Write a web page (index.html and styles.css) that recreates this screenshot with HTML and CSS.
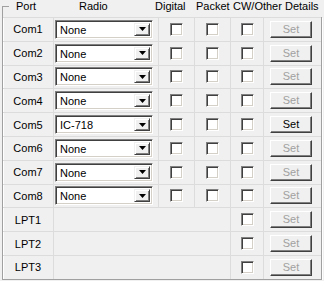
FILE: index.html
```html
<!DOCTYPE html>
<html>
<head>
    <title>Ports</title>
    <link rel="stylesheet" href="styles.css">
</head>
<body>
    <div class="head">
        <span class="corner"></span>
        <span class="h-port">Port</span>
        <span class="h-radio">Radio</span>
        <span class="h-digital">Digital</span>
        <span class="h-packet">Packet</span>
        <span class="h-cw">CW/Other Details</span>
    </div>

    <div class="grid">
        <div class="row">
            <div class="cell port">Com1</div>
            <div class="cell radio"><div class="combo"><span class="val">None</span><span class="drop"><svg width="7" height="4"><path d="M0 0h7L3.5 4z"/></svg></span></div></div>
            <div class="cell"><span class="chk"></span></div>
            <div class="cell"><span class="chk"></span></div>
            <div class="cell"><span class="chk"></span></div>
            <div class="cell set"><button class="btn" disabled>Set</button></div>
        </div>
        <div class="row">
            <div class="cell port">Com2</div>
            <div class="cell radio"><div class="combo"><span class="val">None</span><span class="drop"><svg width="7" height="4"><path d="M0 0h7L3.5 4z"/></svg></span></div></div>
            <div class="cell"><span class="chk"></span></div>
            <div class="cell"><span class="chk"></span></div>
            <div class="cell"><span class="chk"></span></div>
            <div class="cell set"><button class="btn" disabled>Set</button></div>
        </div>
        <div class="row">
            <div class="cell port">Com3</div>
            <div class="cell radio"><div class="combo"><span class="val">None</span><span class="drop"><svg width="7" height="4"><path d="M0 0h7L3.5 4z"/></svg></span></div></div>
            <div class="cell"><span class="chk"></span></div>
            <div class="cell"><span class="chk"></span></div>
            <div class="cell"><span class="chk"></span></div>
            <div class="cell set"><button class="btn" disabled>Set</button></div>
        </div>
        <div class="row">
            <div class="cell port">Com4</div>
            <div class="cell radio"><div class="combo"><span class="val">None</span><span class="drop"><svg width="7" height="4"><path d="M0 0h7L3.5 4z"/></svg></span></div></div>
            <div class="cell"><span class="chk"></span></div>
            <div class="cell"><span class="chk"></span></div>
            <div class="cell"><span class="chk"></span></div>
            <div class="cell set"><button class="btn" disabled>Set</button></div>
        </div>
        <div class="row">
            <div class="cell port">Com5</div>
            <div class="cell radio"><div class="combo"><span class="val">IC-718</span><span class="drop"><svg width="7" height="4"><path d="M0 0h7L3.5 4z"/></svg></span></div></div>
            <div class="cell"><span class="chk"></span></div>
            <div class="cell"><span class="chk"></span></div>
            <div class="cell"><span class="chk"></span></div>
            <div class="cell set"><button class="btn">Set</button></div>
        </div>
        <div class="row">
            <div class="cell port">Com6</div>
            <div class="cell radio"><div class="combo"><span class="val">None</span><span class="drop"><svg width="7" height="4"><path d="M0 0h7L3.5 4z"/></svg></span></div></div>
            <div class="cell"><span class="chk"></span></div>
            <div class="cell"><span class="chk"></span></div>
            <div class="cell"><span class="chk"></span></div>
            <div class="cell set"><button class="btn" disabled>Set</button></div>
        </div>
        <div class="row">
            <div class="cell port">Com7</div>
            <div class="cell radio"><div class="combo"><span class="val">None</span><span class="drop"><svg width="7" height="4"><path d="M0 0h7L3.5 4z"/></svg></span></div></div>
            <div class="cell"><span class="chk"></span></div>
            <div class="cell"><span class="chk"></span></div>
            <div class="cell"><span class="chk"></span></div>
            <div class="cell set"><button class="btn" disabled>Set</button></div>
        </div>
        <div class="row">
            <div class="cell port">Com8</div>
            <div class="cell radio"><div class="combo"><span class="val">None</span><span class="drop"><svg width="7" height="4"><path d="M0 0h7L3.5 4z"/></svg></span></div></div>
            <div class="cell"><span class="chk"></span></div>
            <div class="cell"><span class="chk"></span></div>
            <div class="cell"><span class="chk"></span></div>
            <div class="cell set"><button class="btn" disabled>Set</button></div>
        </div>
        <div class="row">
            <div class="cell port">LPT1</div>
            <div class="cell span"></div>
            <div class="cell"><span class="chk"></span></div>
            <div class="cell set"><button class="btn" disabled>Set</button></div>
        </div>
        <div class="row">
            <div class="cell port">LPT2</div>
            <div class="cell span"></div>
            <div class="cell"><span class="chk"></span></div>
            <div class="cell set"><button class="btn" disabled>Set</button></div>
        </div>
        <div class="row">
            <div class="cell port">LPT3</div>
            <div class="cell span"></div>
            <div class="cell"><span class="chk"></span></div>
            <div class="cell set"><button class="btn" disabled>Set</button></div>
        </div>
    </div>
</body>
</html>
```

FILE: styles.css
```css
body {
    margin: 0;
    background: #f0f0f0;
    font-family: "Liberation Sans", Arial, sans-serif;
    font-size: 11px;
    color: #000;
}

.head {
    display: flex;
    height: 17px;
    margin-left: 2px;
    line-height: 13px;
}

.corner {
    width: 7px;
    height: 11px;
    margin-top: 6px;
    box-sizing: border-box;
    border-top: 1px solid #a0a0a0;
    border-left: 1px solid #a0a0a0;
}

.h-port {
    width: 70px;
    padding-left: 7px;
    box-sizing: border-box;
}

.h-radio {
    width: 76px;
}

.h-digital {
    width: 41px;
}

.h-packet {
    width: 37px;
}

.grid {
    width: 320px;
    margin-left: 2px;
    box-sizing: border-box;
    border: 1px solid #a0a0a0;
    border-top: none;
    box-shadow: 1px 1px 0 #fff, inset 1px 0 0 #fff;
    display: grid;
    grid-template-rows: repeat(11, 23.8px);
}

.row {
    display: grid;
    grid-template-columns: 50px 105px 36px 36px 33px 58px;
    border-top: 1px solid #dcdcdc;
}

.cell {
    display: flex;
    align-items: center;
    justify-content: center;
    border-left: 1px solid #dcdcdc;
}

.cell.port {
    border-left: none;
}

.cell.span {
    grid-column: span 3;
}

.cell.radio {
    justify-content: flex-start;
    padding-left: 1px;
}

.cell.set {
    padding-right: 3px;
}

.combo {
    display: flex;
    width: 98px;
    height: 19px;
    box-sizing: border-box;
    padding: 2px;
    background: #fff;
    border: 1px solid;
    border-color: #808080 #fff #fff #808080;
    box-shadow: inset 1px 1px 0 #404040, inset -1px -1px 0 #d4d0c8;
}

.val {
    flex: 1;
    padding-left: 2px;
    line-height: 14px;
}

.drop {
    width: 16px;
    display: flex;
    align-items: center;
    justify-content: center;
    box-sizing: border-box;
    background: #f0f0f0;
    border: 1px solid;
    border-color: #f0f0f0 #404040 #404040 #f0f0f0;
    box-shadow: inset 1px 1px 0 #fff, inset -1px -1px 0 #808080;
}

.chk {
    width: 13px;
    height: 13px;
    box-sizing: border-box;
    background: #fff;
    border: 1px solid;
    border-color: #808080 #fff #fff #808080;
    box-shadow: inset 1px 1px 0 #404040, inset -1px -1px 0 #d4d0c8;
}

.btn {
    width: 42px;
    height: 17px;
    padding: 0;
    font-family: inherit;
    font-size: 11px;
    line-height: 13px;
    color: #000;
    background: #f0f0f0;
    border: 1px solid;
    border-color: #fff #404040 #404040 #fff;
    box-shadow: inset -1px -1px 0 #808080, inset 1px 1px 0 #f0f0f0;
}

.btn:disabled {
    color: #a0a0a0;
}
```
